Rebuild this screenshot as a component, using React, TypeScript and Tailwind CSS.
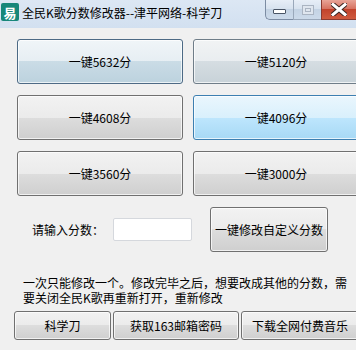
import React from "react";

const font = "font-['SimSun','Noto_Sans_CJK_SC',sans-serif]";

const variants = {
  normal:
    "border-[#707070] bg-[linear-gradient(#f2f2f2,#ebebeb_50%,#dddddd_50%,#cfcfcf)]",
  focus:
    "border-[#4d6a85] bg-[linear-gradient(#f0f5f8,#e6eef3_50%,#cadce6_50%,#bcd2de)]",
  fade:
    "border-[#6f7d88] bg-[linear-gradient(#f1f3f4,#e9edf0_50%,#d5dde2_50%,#c8d2d8)]",
  hover:
    "border-[#3c7fb1] bg-[linear-gradient(#eaf6fd,#d9f0fc_50%,#bee6fd_50%,#a7d9f5)]",
};

function WinButton({
  children,
  variant = "normal",
  className = "",
}: {
  children: React.ReactNode;
  variant?: keyof typeof variants;
  className?: string;
}) {
  return (
    <button
      type="button"
      className={`flex items-center justify-center whitespace-nowrap rounded-[3px] border text-[12px] text-black shadow-[inset_0_0_0_1px_rgba(255,255,255,0.7)] ${variants[variant]} ${className}`}
    >
      {children}
    </button>
  );
}

export default function App() {
  return (
    <div className={`relative h-[350px] w-[356px] overflow-hidden bg-[#f0f0f0] ${font}`}>
      {/* title bar */}
      <div className="flex h-[28px] items-start bg-[linear-gradient(#dce7f4,#d2e0f0)]">
        <div className="ml-[1px] mt-[3px] flex h-[18px] w-[18px] items-center justify-center rounded-[2px] bg-[#17877a] text-[13px] font-bold leading-none text-white">
          易
        </div>
        <div className="ml-[3px] mt-[5px] text-[12px] leading-[16px] text-black">
          全民K歌分数修改器--津平网络-科学刀
        </div>
        <div className="ml-auto flex h-[20px]">
          <div className="flex w-[28px] items-center justify-center rounded-bl-[5px] border border-t-0 border-r-0 border-[#7c8ca3] bg-[linear-gradient(#e7eef7,#d6e1ee_50%,#c4d3e4_50%,#ccdaea)]">
            <div className="mt-[4px] h-[5px] w-[13px] rounded-[1px] border border-[#4a5566] bg-white" />
          </div>
          <div className="flex w-[28px] items-center justify-center border-b border-l border-[#9aa8ba] bg-[linear-gradient(#e7eef7,#d6e1ee_50%,#c4d3e4_50%,#ccdaea)]">
            <div className="h-[10px] w-[12px] border border-[#aab4c2] bg-[#dfe6ef] p-[2px]">
              <div className="h-full w-full border border-[#aab4c2]" />
            </div>
          </div>
          <div className="flex w-[35px] items-center justify-center border-b border-l border-[#8a3a30] bg-[linear-gradient(#e8a497,#d56e5c_50%,#c2432c_50%,#cf5a3e)]">
            <svg width="16" height="13" viewBox="0 0 16 13">
              <path d="M2 1.5 L14 11.5 M14 1.5 L2 11.5" stroke="#3a2420" strokeWidth="5" strokeLinecap="square" />
              <path d="M2 1.5 L14 11.5 M14 1.5 L2 11.5" stroke="#ffffff" strokeWidth="3" strokeLinecap="square" />
            </svg>
          </div>
        </div>
      </div>

      {/* client */}
      <div className="pl-[17px] pt-[11px]">
        <div className="grid w-[400px] grid-cols-[166px_166px] gap-x-[10px] gap-y-[11px]">
          <WinButton variant="focus" className="h-[45px]">一键5632分</WinButton>
          <WinButton variant="fade" className="h-[45px]">一键5120分</WinButton>
          <WinButton className="h-[45px]">一键4608分</WinButton>
          <WinButton variant="hover" className="h-[45px]">一键4096分</WinButton>
          <WinButton className="h-[45px]">一键3560分</WinButton>
          <WinButton className="h-[45px]">一键3000分</WinButton>
        </div>

        <div className="mt-[11px] flex items-center">
          <span className="ml-[15px] text-[12px] text-black">请输入分数：</span>
          <div className="ml-[9px] h-[23px] w-[79px] rounded-[2px] border border-[#d5d8dd] bg-white" />
          <WinButton className="ml-[18px] h-[45px] w-[118px]">一键修改自定义分数</WinButton>
        </div>

        <div className="ml-[6px] mt-[23px] text-[12px] leading-[15px] text-black">
          <div className="whitespace-nowrap">一次只能修改一个。修改完毕之后，想要改成其他的分数，需</div>
          <div className="whitespace-nowrap">要关闭全民K歌再重新打开，重新修改</div>
        </div>
      </div>

      <div className="ml-[14px] mt-[6px] flex w-[400px] gap-[2px]">
        <WinButton className="h-[29px] w-[97px]">科学刀</WinButton>
        <WinButton className="h-[29px] w-[126px]">获取163邮箱密码</WinButton>
        <WinButton className="h-[29px] w-[118px]">下载全网付费音乐</WinButton>
      </div>
    </div>
  );
}
